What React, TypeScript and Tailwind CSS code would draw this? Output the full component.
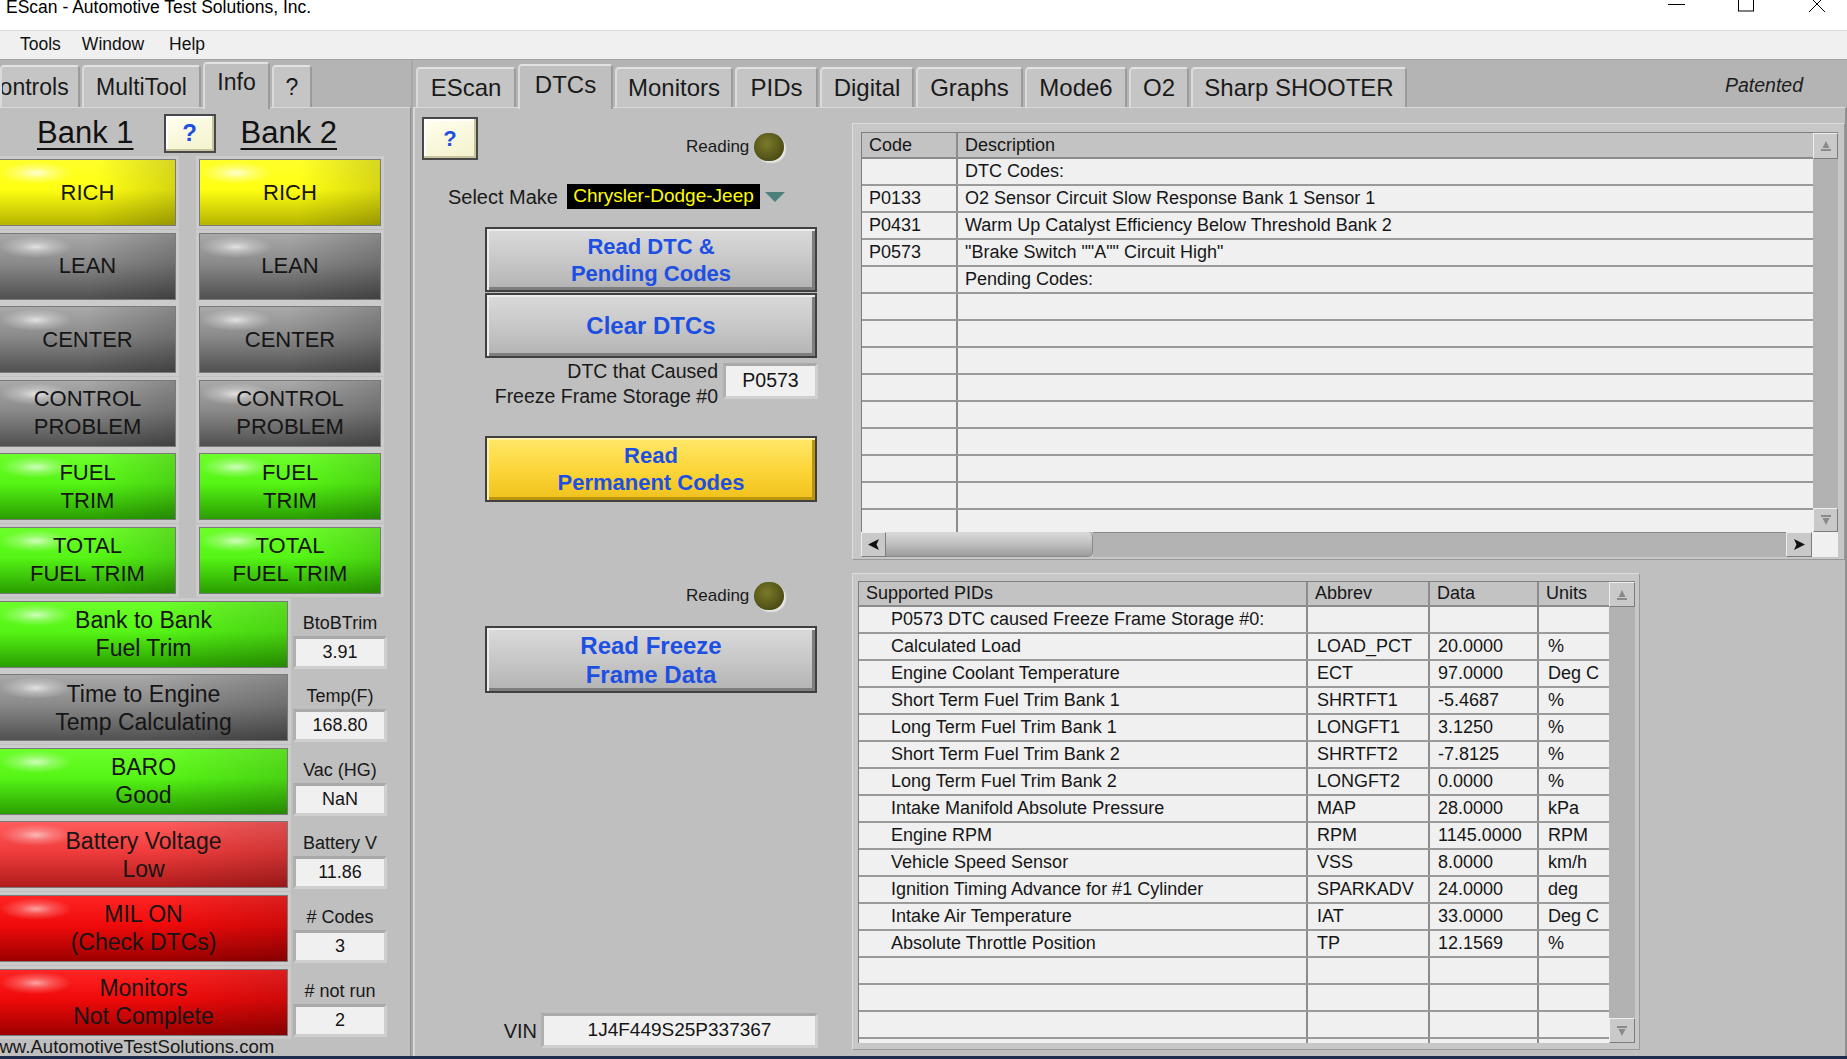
import React from "react";

const LED_BG: Record<string, string> = {
  yellow:
    "bg-[image:radial-gradient(ellipse_36px_11px_at_36px_13px,rgba(255,255,255,0.8)_0%,rgba(255,255,255,0.35)_45%,rgba(255,255,255,0)_100%),linear-gradient(90deg,rgba(0,0,0,0)_55%,rgba(0,0,0,0.16)),linear-gradient(180deg,#ffff2a_0%,#ffff12_45%,#b4b400_100%)]",
  gray:
    "bg-[image:radial-gradient(ellipse_36px_11px_at_36px_13px,rgba(255,255,255,0.7)_0%,rgba(255,255,255,0.3)_45%,rgba(255,255,255,0)_100%),linear-gradient(90deg,rgba(0,0,0,0)_50%,rgba(0,0,0,0.2)),linear-gradient(180deg,#a9a9a9_0%,#8a8a8a_45%,#505050_100%)]",
  green:
    "bg-[image:radial-gradient(ellipse_36px_11px_at_36px_13px,rgba(255,255,255,0.7)_0%,rgba(255,255,255,0.3)_45%,rgba(255,255,255,0)_100%),linear-gradient(90deg,rgba(0,0,0,0)_55%,rgba(0,0,0,0.14)),linear-gradient(180deg,#6cff2a_0%,#55f515_45%,#2a9e00_100%)]",
  red1:
    "bg-[image:radial-gradient(ellipse_36px_11px_at_36px_13px,rgba(255,255,255,0.6)_0%,rgba(255,255,255,0.25)_45%,rgba(255,255,255,0)_100%),linear-gradient(90deg,rgba(0,0,0,0)_55%,rgba(0,0,0,0.14)),linear-gradient(180deg,#ff5c5c_0%,#f03c3c_45%,#b01c1c_100%)]",
  red2:
    "bg-[image:radial-gradient(ellipse_36px_11px_at_36px_13px,rgba(255,255,255,0.6)_0%,rgba(255,255,255,0.25)_45%,rgba(255,255,255,0)_100%),linear-gradient(90deg,rgba(0,0,0,0)_55%,rgba(0,0,0,0.14)),linear-gradient(180deg,#ff2424_0%,#f00a0a_45%,#9c0000_100%)]",
};

function Led({ kind, className, lines, big }: { kind: string; className: string; lines: string[]; big?: boolean }) {
  return (
    <div
      className={`${LED_BG[kind]} h-[65px] shrink-0 flex flex-col items-center justify-center text-center text-[#151515] shadow-[0_0_0_1px_#7a7a7a,0_0_0_4px_#cbcbcb] ${
        big ? "text-[23px] leading-[28px]" : "text-[22px] leading-[28px]"
      } ${className}`}
    >
      {lines.map((l, i) => (
        <div key={i}>{l}</div>
      ))}
    </div>
  );
}

function ValueBox({ className, text }: { className: string; text: string }) {
  return (
    <div
      className={`shrink-0 bg-[#f0f0f0] border-[3px] border-[#cfcfcf] border-t-[#a9a9a9] border-l-[#b0b0b0] flex items-center justify-center text-[#151515] ${className}`}
    >
      {text}
    </div>
  );
}

function Lamp({ className }: { className?: string }) {
  return (
    <div
      className={`w-[30px] h-[28px] shrink-0 rounded-full bg-[radial-gradient(ellipse_at_42%_38%,#7a7a2c_0%,#58581a_55%,#3a3a0c_100%)] shadow-[2px_2px_1px_#e6e6e6] ${className ?? ""}`}
    />
  );
}

function QBtn({ className }: { className: string }) {
  return (
    <div
      className={`shrink-0 bg-[linear-gradient(160deg,#ffffef,#f3f1cb)] border-2 border-[#484848] shadow-[inset_-2px_-2px_0_#c8c4a0,inset_2px_2px_0_#ffffff] flex items-center justify-center text-[#1d4fe2] font-bold ${className}`}
    >
      ?
    </div>
  );
}

function BigBtn({ className, lines, yellow }: { className: string; lines: string[]; yellow?: boolean }) {
  return (
    <div
      className={`w-[332px] shrink-0 border-2 border-[#404040] flex flex-col items-center justify-center text-[#1d4fe2] font-bold text-center ${
        yellow
          ? "bg-[linear-gradient(180deg,#ffe86a_0%,#fcd63a_50%,#efc11c_100%)] shadow-[inset_2px_2px_0_#fff2a6,inset_-3px_-3px_0_#b8950c]"
          : "bg-[linear-gradient(180deg,#dadada_0%,#c8c8c8_50%,#b3b3b3_100%)] shadow-[inset_2px_2px_0_#ededed,inset_-3px_-3px_0_#7e7e7e]"
      } ${className}`}
    >
      {lines.map((l, i) => (
        <div key={i}>{l}</div>
      ))}
    </div>
  );
}

function ScrollBtn({ className, children }: { className: string; children: React.ReactNode }) {
  return (
    <div
      className={`shrink-0 bg-[#c9c9c9] border border-[#eeeeee] border-r-[#7c7c7c] border-b-[#7c7c7c] flex items-center justify-center ${className}`}
    >
      {children}
    </div>
  );
}

const UpIcon = () => (
  <svg width="10" height="10" viewBox="0 0 10 10">
    <path d="M0 8H10V10H0Z M1.5 7H8.5L5 0Z" fill="#8a8a8a" />
  </svg>
);
const DownIcon = () => (
  <svg width="10" height="10" viewBox="0 0 10 10">
    <path d="M0 0H10V2H0Z M1.5 3H8.5L5 10Z" fill="#8a8a8a" />
  </svg>
);
const LeftIcon = () => (
  <svg width="12" height="11" viewBox="0 0 12 11">
    <path d="M0 5.5L11 0L8.5 5.5L11 11Z" fill="#111" />
  </svg>
);
const RightIcon = () => (
  <svg width="12" height="11" viewBox="0 0 12 11">
    <path d="M12 5.5L1 0L3.5 5.5L1 11Z" fill="#111" />
  </svg>
);

function VScroll({ className, upH, downH }: { className: string; upH: string; downH: string }) {
  return (
    <div className={`shrink-0 flex flex-col bg-[#b2b2b2] border-t border-[#8a8a8a] ${className}`}>
      <ScrollBtn className={`w-full ${upH}`}>
        <UpIcon />
      </ScrollBtn>
      <div className="flex-1" />
      <ScrollBtn className={`w-full ${downH}`}>
        <DownIcon />
      </ScrollBtn>
    </div>
  );
}

const dtcRows: [string, string][] = [
  ["", "DTC Codes:"],
  ["P0133", "O2 Sensor Circuit Slow Response Bank 1 Sensor 1"],
  ["P0431", "Warm Up Catalyst Efficiency Below Threshold Bank 2"],
  ["P0573", '"Brake Switch ""A"" Circuit High"'],
  ["", "Pending Codes:"],
  ["", ""],
  ["", ""],
  ["", ""],
  ["", ""],
  ["", ""],
  ["", ""],
  ["", ""],
  ["", ""],
  ["", ""],
];

const pidRows: [string, string, string, string][] = [
  ["P0573 DTC caused Freeze Frame Storage #0:", "", "", ""],
  ["Calculated Load", "LOAD_PCT", "20.0000", "%"],
  ["Engine Coolant Temperature", "ECT", "97.0000", "Deg C"],
  ["Short Term Fuel Trim Bank 1", "SHRTFT1", "-5.4687", "%"],
  ["Long Term Fuel Trim Bank 1", "LONGFT1", "3.1250", "%"],
  ["Short Term Fuel Trim Bank 2", "SHRTFT2", "-7.8125", "%"],
  ["Long Term Fuel Trim Bank 2", "LONGFT2", "0.0000", "%"],
  ["Intake Manifold Absolute Pressure", "MAP", "28.0000", "kPa"],
  ["Engine RPM", "RPM", "1145.0000", "RPM"],
  ["Vehicle Speed Sensor", "VSS", "8.0000", "km/h"],
  ["Ignition Timing Advance for #1 Cylinder", "SPARKADV", "24.0000", "deg"],
  ["Intake Air Temperature", "IAT", "33.0000", "Deg C"],
  ["Absolute Throttle Position", "TP", "12.1569", "%"],
  ["", "", "", ""],
  ["", "", "", ""],
  ["", "", "", ""],
  ["", "", "", ""],
];

function UpperTable() {
  return (
    <div className="mt-[15px] w-[993px] h-[437px] shrink-0 bg-[#c7c7c7] border border-[#dcdcdc] border-r-[#999999] border-b-[#999999] pt-[8px] pl-[8px]">
      <div className="flex h-[400px]">
        <div className="w-[952px] h-[400px] shrink-0 flex flex-col overflow-hidden border-t border-l border-[#7f7f7f] text-[18px] text-[#161616]">
          <div className="flex h-[26px] shrink-0 bg-[#c3c3c3] border-b-2 border-[#8c8c8c]">
            <div className="w-[96px] shrink-0 pl-[7px] flex items-center border-r-2 border-[#8c8c8c]">Code</div>
            <div className="flex-1 pl-[7px] flex items-center">Description</div>
          </div>
          <div className="flex-1 overflow-hidden">
            {dtcRows.map((r, i) => (
              <div key={i} className="flex h-[27px] bg-[#f0f0f0] border-b-2 border-[#9a9a9a]">
                <div className="w-[96px] shrink-0 pl-[7px] flex items-center border-r-2 border-[#8c8c8c]">{r[0]}</div>
                <div className="flex-1 pl-[7px] flex items-center whitespace-nowrap">{r[1]}</div>
              </div>
            ))}
          </div>
        </div>
        <VScroll className="w-[25px] h-[400px]" upH="h-[26px]" downH="h-[24px]" />
      </div>
      <div className="flex h-[25px] w-[977px]">
        <ScrollBtn className="w-[25px] h-[25px]">
          <LeftIcon />
        </ScrollBtn>
        <div className="w-[207px] h-[25px] shrink-0 bg-[linear-gradient(180deg,#dadada_0%,#c8c8c8_35%,#9c9c9c_100%)] rounded-r-[5px] border-r border-b border-[#8a8a8a]" />
        <div className="flex-1 h-[25px] bg-[#b3b3b3] border-t border-[#8a8a8a]" />
        <ScrollBtn className="w-[26px] h-[25px]">
          <RightIcon />
        </ScrollBtn>
        <div className="w-[26px] h-[25px] shrink-0 bg-[#f0f0f0]" />
      </div>
    </div>
  );
}

function LowerTable() {
  return (
    <div className="mt-[13px] w-[788px] h-[477px] shrink-0 bg-[#c7c7c7] border border-[#dcdcdc] border-r-[#999999] border-b-[#999999] pt-[7px] pl-[5px]">
      <div className="flex h-[462px]">
        <div className="w-[751px] h-[462px] shrink-0 flex flex-col overflow-hidden border-t border-l border-[#7f7f7f] text-[18px] text-[#161616]">
          <div className="flex h-[25px] shrink-0 bg-[#c3c3c3] border-b-2 border-[#8c8c8c]">
            <div className="w-[449px] shrink-0 pl-[7px] flex items-center border-r-2 border-[#8c8c8c]">Supported PIDs</div>
            <div className="w-[122px] shrink-0 pl-[7px] flex items-center border-r-2 border-[#8c8c8c]">Abbrev</div>
            <div className="w-[109px] shrink-0 pl-[7px] flex items-center border-r-2 border-[#8c8c8c]">Data</div>
            <div className="flex-1 pl-[7px] flex items-center">Units</div>
          </div>
          <div className="flex-1 overflow-hidden">
            {pidRows.map((r, i) => (
              <div key={i} className="flex h-[27px] bg-[#f0f0f0] border-b-2 border-[#9a9a9a] whitespace-nowrap">
                <div className="w-[449px] shrink-0 pl-[32px] flex items-center border-r-2 border-[#8c8c8c]">{r[0]}</div>
                <div className="w-[122px] shrink-0 pl-[9px] flex items-center border-r-2 border-[#8c8c8c]">{r[1]}</div>
                <div className="w-[109px] shrink-0 pl-[8px] flex items-center border-r-2 border-[#8c8c8c]">{r[2]}</div>
                <div className="flex-1 pl-[9px] flex items-center">{r[3]}</div>
              </div>
            ))}
          </div>
        </div>
        <VScroll className="w-[26px] h-[462px]" upH="h-[25px]" downH="h-[25px]" />
      </div>
    </div>
  );
}

const tabBase = "shrink-0 rounded-t-[4px] border-t-2 border-x-2 border-t-[#e2e2e2] border-l-[#dadada] border-r-[#9b9b9b] flex items-center justify-center text-[#1a1a1a] whitespace-nowrap overflow-hidden";

function LeftPanel() {
  const pairs: [string, string[]][] = [
    ["yellow", ["RICH"]],
    ["gray", ["LEAN"]],
    ["gray", ["CENTER"]],
    ["gray", ["CONTROL", "PROBLEM"]],
    ["green", ["FUEL", "TRIM"]],
    ["green", ["TOTAL", "FUEL TRIM"]],
  ];
  const wides: [string, string[], string, string][] = [
    ["green", ["Bank to Bank", "Fuel Trim"], "BtoBTrim", "3.91"],
    ["gray", ["Time to Engine", "Temp Calculating"], "Temp(F)", "168.80"],
    ["green", ["BARO", "Good"], "Vac (HG)", "NaN"],
    ["red1", ["Battery Voltage", "Low"], "Battery V", "11.86"],
    ["red2", ["MIL ON", "(Check DTCs)"], "# Codes", "3"],
    ["red2", ["Monitors", "Not Complete"], "# not run", "2"],
  ];
  return (
    <div className="w-[411px] shrink-0 flex flex-col">
      <div className="h-[47px] shrink-0 flex items-end gap-[2px] text-[23px]">
        <div className={`${tabBase} w-[80px] h-[42px] bg-[#c5c5c5] justify-start`}>
          <span className="ml-[-19px]">Controls</span>
        </div>
        <div className={`${tabBase} w-[119px] h-[42px] bg-[#c5c5c5]`}>MultiTool</div>
        <div className={`${tabBase} w-[67px] h-[47px] bg-[#bfbfbf] relative z-10 mb-[-2px] pb-[8px]`}>Info</div>
        <div className={`${tabBase} w-[40px] h-[42px] bg-[#c5c5c5]`}>?</div>
      </div>
      <div className="flex-1 bg-[#bfbfbf] border-t border-[#d8d8d8] border-r border-r-[#8f8f8f] flex flex-col overflow-hidden">
        <div className="flex items-center h-[40px] mt-[5px] shrink-0 text-[31px] text-[#111]">
          <span className="ml-[37px] underline decoration-2 underline-offset-[5px]">Bank 1</span>
          <QBtn className="ml-[30px] w-[52px] h-[39px] text-[24px]" />
          <span className="ml-[25px] underline decoration-2 underline-offset-[5px]">Bank 2</span>
        </div>
        <div className="flex flex-col gap-[8.6px] mt-[7px] shrink-0">
          {pairs.map(([k, l], i) => (
            <div key={i} className="flex h-[65px]">
              <Led kind={k} lines={l} className="w-[175px]" />
              <Led kind={k} lines={l} className="ml-[25px] w-[180px]" />
            </div>
          ))}
          {wides.map(([k, l, lab, val], i) => (
            <div key={i} className="flex h-[65px]">
              <Led kind={k} lines={l} big className="w-[287px]" />
              <div className="ml-[6px] w-[94px] shrink-0 flex flex-col items-center">
                <div className="pt-[12px] text-[18px] leading-[18px] text-[#181818] whitespace-nowrap">{lab}</div>
                <ValueBox className="mt-[4px] w-[94px] h-[33px] text-[18px]" text={val} />
              </div>
            </div>
          ))}
        </div>
        <div className="mt-[2px] ml-[-14px] text-[18.6px] leading-[19px] whitespace-nowrap text-[#181818]">
          www.AutomotiveTestSolutions.com
        </div>
      </div>
    </div>
  );
}

function MiddleCol() {
  return (
    <div className="w-[437px] shrink-0 flex flex-col text-[#1a1a1a]">
      <div className="flex items-start mt-[9px] shrink-0">
        <QBtn className="ml-[7px] w-[56px] h-[43px] text-[22px]" />
        <div className="ml-[208px] mt-[16px] flex items-center h-[28px]">
          <span className="text-[17px]">Reading</span>
          <Lamp className="ml-[5px]" />
        </div>
      </div>
      <div className="flex items-center mt-[23px] h-[25px] shrink-0">
        <div className="w-[143px] shrink-0 text-right text-[20px] whitespace-nowrap">Select Make</div>
        <div className="ml-[9px] w-[193px] h-[25px] shrink-0 bg-black text-[#ffff00] text-[19px] flex items-center justify-center whitespace-nowrap">
          Chrysler-Dodge-Jeep
        </div>
        <svg className="ml-[5px]" width="20" height="10" viewBox="0 0 20 10">
          <polygon points="0,0 20,0 10,10" fill="#4d7f7c" />
        </svg>
      </div>
      <BigBtn className="ml-[70px] mt-[18px] h-[65px] text-[22px] leading-[27px]" lines={["Read DTC &", "Pending Codes"]} />
      <BigBtn className="ml-[70px] mt-[1px] h-[65px] text-[24px] leading-[29px]" lines={["Clear DTCs"]} />
      <div className="flex items-start mt-[1px] shrink-0">
        <div className="w-[303px] shrink-0 text-right text-[19.5px] leading-[25px] whitespace-nowrap">
          <div>DTC that Caused</div>
          <div>Freeze Frame Storage #0</div>
        </div>
        <ValueBox className="ml-[5px] mt-[4px] w-[95px] h-[36px] text-[19.5px]" text="P0573" />
      </div>
      <BigBtn yellow className="ml-[70px] mt-[27px] h-[66px] text-[22px] leading-[27px]" lines={["Read", "Permanent Codes"]} />
      <div className="ml-[271px] mt-[80px] flex items-center h-[28px] shrink-0">
        <span className="text-[17px]">Reading</span>
        <Lamp className="ml-[5px]" />
      </div>
      <BigBtn className="ml-[70px] mt-[16px] h-[67px] text-[24px] leading-[29px]" lines={["Read Freeze", "Frame Data"]} />
      <div className="flex items-center mt-auto mb-[8px] shrink-0">
        <div className="w-[122px] shrink-0 text-right text-[20px]">VIN</div>
        <ValueBox className="ml-[4px] w-[277px] h-[35px] text-[19px]" text="1J4F449S25P337367" />
      </div>
    </div>
  );
}

function RightPanel() {
  const tabs: [string, string, boolean][] = [
    ["EScan", "w-[100px]", false],
    ["DTCs", "w-[95px]", true],
    ["Monitors", "w-[118px]", false],
    ["PIDs", "w-[83px]", false],
    ["Digital", "w-[94px]", false],
    ["Graphs", "w-[107px]", false],
    ["Mode6", "w-[102px]", false],
    ["O2", "w-[60px]", false],
    ["Sharp SHOOTER", "w-[216px]", false],
  ];
  return (
    <div className="flex-1 min-w-0 flex flex-col">
      <div className="h-[47px] shrink-0 flex items-end pl-[3px] gap-[2px] text-[24px]">
        {tabs.map(([t, w, sel]) => (
          <div
            key={t}
            className={`${tabBase} ${w} ${sel ? "h-[45px] bg-[#bfbfbf] relative z-10 mb-[-2px] pb-[6px]" : "h-[40px] bg-[#c5c5c5]"}`}
          >
            {t}
          </div>
        ))}
        <div className="ml-auto mr-[44px] self-center mt-[4px] italic text-[19.5px] text-[#1c1c1c]">Patented</div>
      </div>
      <div className="flex-1 flex bg-[#bfbfbf] border-t border-l-2 border-[#d8d8d8] border-r-2 border-r-[#8f8f8f] overflow-hidden">
        <MiddleCol />
        <div className="flex-1 flex flex-col">
          <UpperTable />
          <LowerTable />
        </div>
      </div>
    </div>
  );
}

export default function App() {
  return (
    <div className="w-[1847px] h-[1059px] overflow-hidden bg-[#b4b4b4] flex flex-col font-['Liberation_Sans',Arial,sans-serif] text-[#161616]">
      <div className="h-[30px] shrink-0 bg-white flex overflow-hidden">
        <div className="flex-1 pl-[6px] mt-[-2px] text-[17.5px] leading-[18px] text-black whitespace-nowrap">
          EScan - Automotive Test Solutions, Inc.
        </div>
        <svg width="187" height="30" viewBox="1660 0 187 30" className="shrink-0">
          <line x1="1668" y1="4.5" x2="1685" y2="4.5" stroke="#000" strokeWidth="1" />
          <rect x="1738.5" y="-6" width="15" height="17" fill="none" stroke="#000" strokeWidth="1" />
          <line x1="1809" y1="-4" x2="1825" y2="12" stroke="#000" strokeWidth="1" />
          <line x1="1825" y1="-4" x2="1809" y2="12" stroke="#000" strokeWidth="1" />
        </svg>
      </div>
      <div className="h-[30px] shrink-0 bg-[#f0f0f0] border-t border-[#dadada] border-b border-b-[#a3a3a3] flex items-center pb-[2px] text-[17.5px] text-[#111]">
        <span className="ml-[20px]">Tools</span>
        <span className="ml-[21px]">Window</span>
        <span className="ml-[25px]">Help</span>
      </div>
      <div className="flex h-[996px] shrink-0">
        <LeftPanel />
        <div className="w-[2px] shrink-0 bg-[#a8a8a8]" />
        <RightPanel />
      </div>
      <div className="flex-1 bg-[#1d2c4c]" />
    </div>
  );
}
